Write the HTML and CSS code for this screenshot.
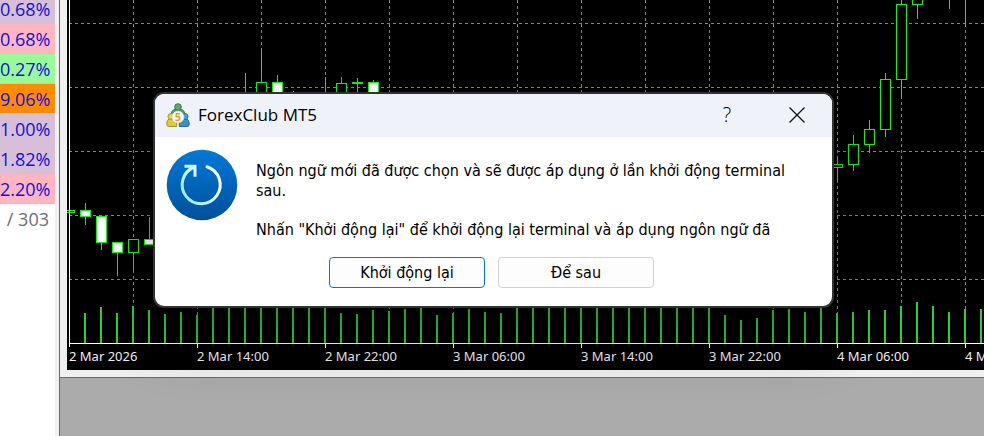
FILE: index.html
```html
<!DOCTYPE html>
<html lang="vi">
<head>
  <meta charset="UTF-8">
  <meta name="viewport" content="width=device-width, initial-scale=1.0">
  <title>ForexClub MT5</title>
  <link rel="stylesheet" href="styles.css">
</head>
<body>

<main class="terminal">

  <aside class="watch">
    <table class="watch-table">
      <tbody>
        <tr class="thistle"><td>0.68%</td></tr>
        <tr class="pink"><td>0.68%</td></tr>
        <tr class="green"><td>0.27%</td></tr>
        <tr class="orange"><td>9.06%</td></tr>
        <tr class="thistle"><td>1.00%</td></tr>
        <tr class="thistle"><td>1.82%</td></tr>
        <tr class="pink"><td>2.20%</td></tr>
      </tbody>
      <tfoot>
        <tr><td>/ 303</td></tr>
      </tfoot>
    </table>
  </aside>

  <section class="workspace">
    <div class="chart-window">
      <div class="chart">
        <svg class="plot" aria-hidden="true">
          <!-- grid -->
          <g class="grid">
            <path d="M2 23.5H2000M2 87.5H2000M2 151.5H2000M2 215.5H2000M2 279.5H2000"/>
            <path d="M66.5 0V343M130.5 0V343M194.5 0V343M258.5 0V343M322.5 0V343M386.5 0V343M450.5 0V343M514.5 0V343M578.5 0V343M642.5 0V343M706.5 0V343M770.5 0V343M834.5 0V343M898.5 0V343"/>
          </g>

          <!-- volumes -->
          <path class="volume" d="M18 343V313M34 343V307M50 343V313M66 343V306M82 343V310M98 343V314M114 343V312M130 343V315M146 343V308M162 343V300M178 343V300M194 343V298M210 343V300M226 343V300M242 343V300M258 343V300M274 343V313M290 343V314M306 343V310M322 343V311M338 343V309M354 343V304M370 343V315M386 343V313M402 343V309M418 343V312M434 343V313M450 343V307M466 343V304M482 343V308M498 343V300M514 343V300M530 343V300M546 343V300M562 343V300M578 343V300M594 343V300M610 343V300M626 343V300M642 343V300M658 343V315M674 343V320M690 343V318M706 343V310M722 343V309M738 343V312M754 343V306M770 343V313M786 343V312M802 343V310M818 343V310M834 343V306M850 343V302M866 343V306M882 343V312M898 343V309M914 343V309"/>

          <!-- candles -->
          <path class="wick" d="M18.5 203V225M34.5 216V250M50.5 243V276M66.5 239V270M82.5 217V245M178.5 73V130M194.5 49V82M210.5 75V82M226.5 91V130M258.5 77V130M274.5 77V83M290.5 78V130M306.5 80V83M770.5 157V181M786.5 135V171M802.5 120V153M818.5 73V137M834.5 0V97M850.5 0V19M882.5 0V9M898.5 0V26"/>
          <g class="bull">
            <rect x="-2.5" y="210.500" width="10" height="2"/>
            <rect x="61.5" y="239.500" width="10" height="13"/>
            <rect x="189.5" y="82.500" width="10" height="40"/>
            <rect x="269.5" y="83.500" width="10" height="40"/>
            <rect x="285.5" y="82.500" width="10" height="1"/>
            <rect x="765.5" y="164.500" width="10" height="3"/>
            <rect x="781.5" y="144.500" width="10" height="20"/>
            <rect x="797.5" y="129.500" width="10" height="15"/>
            <rect x="813.5" y="79.500" width="10" height="50"/>
            <rect x="829.5" y="4.500" width="10" height="75"/>
            <rect x="845.5" y="-9.500" width="10" height="14"/>
          </g>
          <g class="bear">
            <rect x="13.5" y="210.500" width="10" height="6"/>
            <rect x="29.5" y="216.500" width="10" height="26"/>
            <rect x="45.5" y="242.500" width="10" height="10"/>
            <rect x="77.5" y="239.500" width="10" height="5"/>
            <rect x="205.5" y="82.500" width="10" height="40"/>
            <rect x="301.5" y="82.500" width="10" height="40"/>
          </g>

          <!-- axes -->
          <path class="axis" d="M2.5 0V347M2 343.5H2000M130.5 343V348M258.5 343V348M386.5 343V348M514.5 343V348M642.5 343V348M770.5 343V348M898.5 343V348"/>
        </svg>
        <div class="times">
          <span>2 Mar 2026</span>
          <span>2 Mar 14:00</span>
          <span>2 Mar 22:00</span>
          <span>3 Mar 06:00</span>
          <span>3 Mar 14:00</span>
          <span>3 Mar 22:00</span>
          <span>4 Mar 06:00</span>
          <span>4 Mar 14:00</span>
        </div>
      </div>
    </div>
  </section>

</main>

<div class="dialog" role="dialog" aria-labelledby="dialog-title">
  <header class="titlebar">
    <svg class="logo" viewBox="0 0 24 24" aria-hidden="true">
      <path d="M5 12.500q0-5.500 4.500-6.500h5q4.500 1 4.500 6.500z" fill="#55a060" stroke="#3b7d4a"/>
      <circle cx="12" cy="4" r="3.300" fill="#5fa96a" stroke="#3b7d4a"/>
      <path d="M.7 21q0-4.500 3-5.500h7v8H3Q.7 23.500.7 21z" fill="#dfca3a" stroke="#a39330"/>
      <circle cx="5" cy="13.500" r="3" fill="#e6d24a" stroke="#a39330"/>
      <path d="M23.300 21q0-4.500-3-5.500h-7v8H21q2.300 0 2.300-2.500z" fill="#3a90c8" stroke="#2a6c9c"/>
      <circle cx="19" cy="13.500" r="3" fill="#4a9fd4" stroke="#2a6c9c"/>
      <circle cx="12" cy="14" r="5.800" fill="#fff" stroke="#e4e2d4"/>
      <text class="logo-digit" x="12" y="18" text-anchor="middle">5</text>
    </svg>
    <h1 class="title" id="dialog-title">ForexClub MT5</h1>
    <button class="caption-btn" type="button" aria-label="Help">?</button>
    <button class="caption-btn" type="button" aria-label="Close">
      <svg width="16" height="16" viewBox="0 0 16 16" aria-hidden="true">
        <path d="M.5.500l15 15M15.500.500l-15 15" fill="none" stroke="#111" stroke-width="1.300"/>
      </svg>
    </button>
  </header>

  <div class="content">
    <svg class="restart" viewBox="0 0 72 72" aria-hidden="true">
      <defs>
        <linearGradient id="disc" x1="0" y1="0" x2="0" y2="1">
          <stop offset="0" stop-color="#0079d8"/>
          <stop offset="1" stop-color="#00509a"/>
        </linearGradient>
        <linearGradient id="arrow" gradientUnits="userSpaceOnUse" x1="16" y1="46" x2="50" y2="22">
          <stop offset="0" stop-color="#9cecff"/>
          <stop offset="1" stop-color="#fff"/>
        </linearGradient>
      </defs>
      <circle cx="36" cy="36" r="35.300" fill="url(#disc)"/>
      <g fill="none" stroke="url(#arrow)" stroke-width="3">
        <path stroke-linecap="round" d="M41 17.700A19 19 0 1 1 28.500 18"/>
        <path d="M18.500 17.200H29V27.700"/>
      </g>
    </svg>
    <div class="message">
      <p>Ngôn ngữ mới đã được chọn và sẽ được áp dụng ở lần khởi động terminal sau.</p>
      <p>Nhấn "Khởi động lại" để khởi động lại terminal và áp dụng ngôn ngữ đã</p>
    </div>
  </div>

  <footer class="actions">
    <button class="btn primary" type="button">Khởi động lại</button>
    <button class="btn" type="button">Để sau</button>
  </footer>
</div>

</body>
</html>
```
FILE: styles.css
```css
* {
  box-sizing: border-box;
}

body {
  margin: 0;
  font-family: "Noto Sans", "Open Sans", sans-serif;
  background: #ababab;
  overflow: hidden;
}

.terminal {
  display: flex;
  height: 100vh;
  overflow: hidden;
}

/* market watch */

.watch {
  flex: none;
  width: 59px;
  height: 100%;
  background: #fff;
  border-right: 4px solid #f0f0f0;
}

.watch-table {
  width: 100%;
  table-layout: fixed;
  border-spacing: 0;
  font-family: "Open Sans", sans-serif;
  font-size: 18px;
  color: #1010e0;
}

.watch-table td {
  height: 30px;
  padding: 2px 5px 0 0;
  line-height: 27px;
  text-align: right;
  white-space: nowrap;
  border-bottom: 1px solid #c8c8c8;
}

/* first row is scrolled partly under the header */
.watch-table tbody tr:first-child td {
  height: 24px;
  padding-top: 0;
  line-height: 19px;
  vertical-align: top;
}

.watch-table tfoot td {
  padding: 0 6px 0 0;
  color: #6d6d6d;
  border-bottom: none;
}

.thistle { background: #d8bfd8; }
.pink { background: #ffb6c1; }
.green { background: #98fb98; }
.orange { background: #ff8c00; }

/* chart */

.workspace {
  flex: 1;
  min-width: 0;
  border-left: 1px solid #696969;
}

.chart-window {
  padding: 0 0 7px 7px;
  background: #f0f0f0;
  border-bottom: 1px solid #696969;
}

.chart {
  background: #000;
  overflow: hidden;
}

.plot {
  display: block;
  width: 100%;
  height: 348px;
  shape-rendering: crispEdges;
}

.grid {
  fill: none;
  stroke: #778899;
  stroke-dasharray: 3 3;
}

.volume {
  fill: none;
  stroke: #32cd32;
  stroke-width: 2;
}

.wick {
  fill: none;
  stroke: #00ff00;
}

.bull {
  fill: #000;
  stroke: #00ff00;
}

.bear {
  fill: #fff;
  stroke: #00ff00;
}

.axis {
  fill: none;
  stroke: #fff;
}

.times {
  display: flex;
  padding: 0 0 6px 2px;
  font-size: 13px;
  line-height: 16px;
  color: #f0f0f0;
}

.times span {
  flex: none;
  width: 128px;
  white-space: nowrap;
}

/* dialog */

.dialog {
  position: absolute;
  top: 92px;
  left: 153px;
  width: 681px;
  border: 2px solid #333;
  border-radius: 11px;
  background: #fff;
  overflow: hidden;
  color: #000;
  box-shadow: 0 30px 60px rgba(0, 0, 0, 0.28);
}

.titlebar {
  display: flex;
  align-items: center;
  height: 43px;
  padding: 0 0 2px 11px;
  background: #eff3f9;
}

.logo {
  width: 24px;
  height: 24px;
}

.logo-digit {
  font: bold 11px "Open Sans", sans-serif;
  fill: #f09a1a;
}

.title {
  flex: 1;
  margin: 0 0 0 8px;
  font-family: "Open Sans", sans-serif;
  font-size: 17px;
  font-weight: normal;
  line-height: 24px;
}

.caption-btn {
  display: flex;
  align-items: center;
  justify-content: center;
  width: 70px;
  height: 100%;
  padding: 0;
  border: none;
  background: none;
  font-family: "Open Sans", sans-serif;
  font-size: 20px;
  font-weight: 300;
  color: #000;
}

.content {
  display: flex;
  gap: 18px;
  padding: 12px 40px 0 11px;
}

.restart {
  flex: none;
  width: 72px;
  height: 72px;
}

.message {
  flex: 1;
  padding: 12px 0 17px;
  font-family: "DejaVu Sans Condensed", "Noto Sans", sans-serif;
  font-size: 16px;
  line-height: 20px;
}

.message p {
  margin: 0;
}

.message p + p {
  margin-top: 19px;
}

.actions {
  display: flex;
  justify-content: center;
  gap: 13px;
  padding: 0 4px 18px 0;
}

.btn {
  width: 156px;
  height: 31px;
  padding: 0;
  border: 1px solid #d0d0d0;
  border-radius: 4px;
  background: #fdfdfd;
  font-family: "DejaVu Sans Condensed", "Noto Sans", sans-serif;
  font-size: 16px;
  color: #000;
}

.btn.primary {
  border-color: #0078d4;
}
```
